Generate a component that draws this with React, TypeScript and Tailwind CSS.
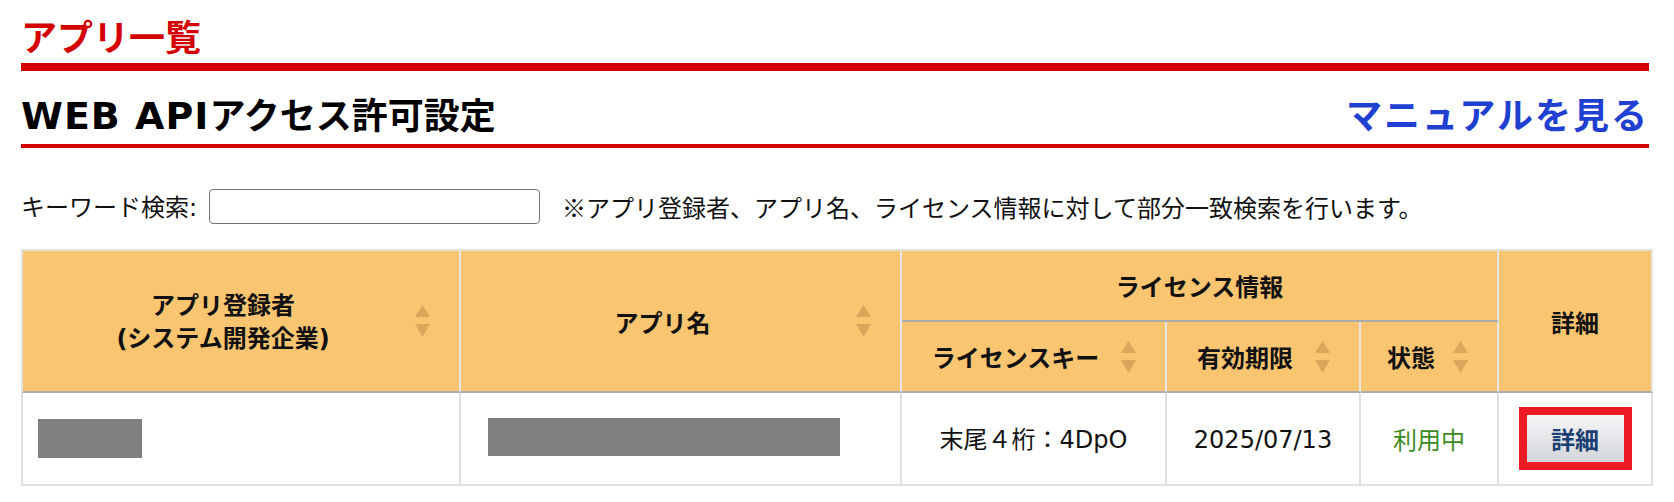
import React from "react";

const latin = "font-['DejaVu_Sans',sans-serif]";

function SortIcon() {
  return (
    <svg
      width="15"
      height="32"
      viewBox="0 0 15 32"
      className="absolute right-[29px] top-1/2 -translate-y-1/2"
    >
      <polygon points="7.5,0 15,12 0,12" fill="#d9a75c" />
      <polygon points="0,19 15,19 7.5,32" fill="#d9a75c" />
    </svg>
  );
}

const th =
  "relative bg-[#f9c570] border-r-2 border-b-2 border-r-[#e6e6e6] border-b-[#ababab] text-[24px] font-bold leading-[33px] text-[#111] align-middle";
const sortTh = th + " pl-[8px] pr-[44px]";
const td =
  "border-r-2 border-b-2 border-[#e0e0e0] text-[24px] text-center align-middle";

export default function App() {
  return (
    <div className="w-[1674px] min-h-screen bg-white pl-[21px] font-['Noto_Sans_CJK_JP',sans-serif] text-[#111]">
      <div className="w-[1628px] pt-[17px] pb-[10px] border-b-8 border-[#d40000]">
        <h1 className="h-[36px] text-[36px] leading-[36px] font-bold text-[#d40000]">
          アプリ一覧
        </h1>
      </div>

      <div className="w-[1628px] h-[53px] mt-[24px] pb-[13px] border-b-4 border-[#d40000] flex items-start justify-between">
        <h2 className="h-[36px] text-[36px] leading-[36px] font-bold text-black">
          <span className={latin + " text-[38px] tracking-[1px]"}>WEB API</span>
          アクセス許可設定
        </h2>
        <a className="h-[36px] text-[36px] leading-[36px] font-bold tracking-[2px] text-[#1f40d0]">
          マニュアルを見る
        </a>
      </div>

      <div className="mt-[41px] h-[35px] flex items-center text-[24px] leading-[35px]">
        <span>
          キーワード検索<span className={latin}>:</span>
        </span>
        <input
          type="text"
          className="ml-[12px] w-[331px] h-[35px] border-[1.5px] border-[#767676] rounded-[4px] bg-white outline-none px-2"
        />
        <span className="ml-[22px]">
          ※アプリ登録者、アプリ名、ライセンス情報に対して部分一致検索を行います。
        </span>
      </div>

      <table className="mt-[25px] w-[1632px] table-fixed border-separate border-spacing-0 border-l-2 border-t-2 border-[#e0e0e0]">
        <colgroup>
          <col className="w-[438px]" />
          <col className="w-[441px]" />
          <col className="w-[265px]" />
          <col className="w-[194px]" />
          <col className="w-[138px]" />
          <col className="w-[154px]" />
        </colgroup>
        <thead>
          <tr className="h-[71px]">
            <th rowSpan={2} className={sortTh}>
              アプリ登録者
              <br />
              <span className={latin}>(</span>システム開発企業
              <span className={latin}>)</span>
              <SortIcon />
            </th>
            <th rowSpan={2} className={sortTh}>
              アプリ名
              <SortIcon />
            </th>
            <th colSpan={3} className={th + " px-2 border-b-[#a39a8c]"}>
              ライセンス情報
            </th>
            <th rowSpan={2} className={th + " px-2"}>
              詳細
            </th>
          </tr>
          <tr className="h-[71px]">
            <th className={sortTh}>
              ライセンスキー
              <SortIcon />
            </th>
            <th className={sortTh}>
              有効期限
              <SortIcon />
            </th>
            <th className={sortTh}>
              状態
              <SortIcon />
            </th>
          </tr>
        </thead>
        <tbody>
          <tr className="h-[93px]">
            <td className={td + " text-left pl-[15px]"}>
              <div className="w-[104px] h-[39px] bg-[#808080]" />
            </td>
            <td className={td + " text-left pl-[27px]"}>
              <div className="w-[352px] h-[38px] bg-[#808080] -mt-[3px]" />
            </td>
            <td className={td + " text-[#111]"}>
              末尾４桁：<span className={latin}>4DpO</span>
            </td>
            <td className={td + " text-[#111]"}>
              <span className={latin}>2025/07/13</span>
            </td>
            <td className={td + " text-[#3d8b1f]"}>利用中</td>
            <td className={td}>
              <div className="inline-flex w-[113px] h-[63px] border-8 border-[#ed1c24] align-middle">
                <button className="w-full h-full bg-linear-to-b from-[#f4f5f7] to-[#d3d6da] text-[24px] font-bold text-[#1c3f73] leading-none">
                  詳細
                </button>
              </div>
            </td>
          </tr>
        </tbody>
      </table>
    </div>
  );
}
